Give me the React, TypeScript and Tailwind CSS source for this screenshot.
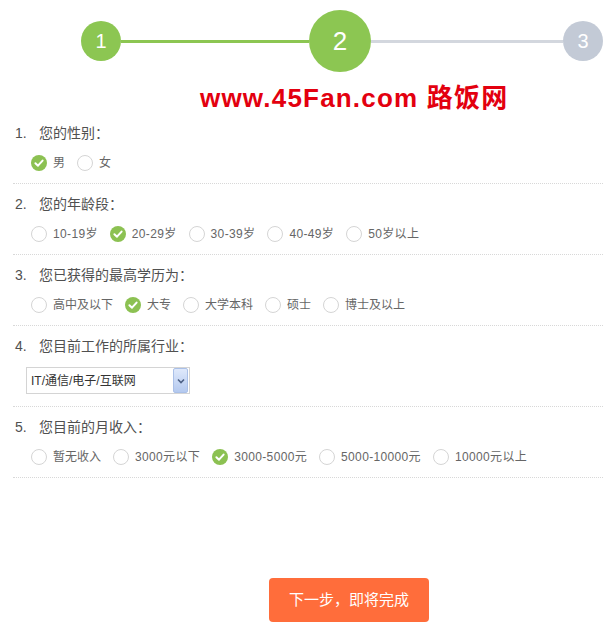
import React from 'react';

const FONT = { fontFamily: '"Liberation Sans", "Noto Sans CJK SC", sans-serif' };

type Question = {
    no: number;
    title: string;
    options?: string[];
    checked?: number;
    select?: string;
};

const questions: Question[] = [
    { no: 1, title: '您的性别：', options: ['男', '女'], checked: 0 },
    { no: 2, title: '您的年龄段：', options: ['10-19岁', '20-29岁', '30-39岁', '40-49岁', '50岁以上'], checked: 1 },
    { no: 3, title: '您已获得的最高学历为：', options: ['高中及以下', '大专', '大学本科', '硕士', '博士及以上'], checked: 1 },
    { no: 4, title: '您目前工作的所属行业：', select: 'IT/通信/电子/互联网' },
    { no: 5, title: '您目前的月收入：', options: ['暂无收入', '3000元以下', '3000-5000元', '5000-10000元', '10000元以上'], checked: 2 },
];

const Radio: React.FC<{ checked: boolean }> = ({ checked }) =>
    checked ? (
        <svg width="16" height="16" viewBox="0 0 16 16" className="shrink-0">
            <circle cx="8" cy="8" r="8" fill="#8cc152" />
            <path d="M4.4 8.2 L7 10.7 L11.6 5.6" stroke="#fff" strokeWidth="2" fill="none" strokeLinecap="round" strokeLinejoin="round" />
        </svg>
    ) : (
        <span className="w-4 h-4 shrink-0 rounded-full border border-[#d5d5d5] bg-white"></span>
    );

const Step: React.FC<{ n: number; size: 'sm' | 'lg'; active: boolean }> = ({ n, size, active }) => (
    <div
        className={`shrink-0 rounded-full flex items-center justify-center text-white ${size === 'lg' ? 'w-[62px] h-[62px] text-[26px]' : 'w-[40px] h-[40px] text-[20px]'} ${active ? 'bg-[#8cc652]' : 'bg-[#c3cad6]'}`}
    >
        {n}
    </div>
);

const Select: React.FC<{ value: string }> = ({ value }) => (
    <div className="mt-[11px] ml-[13px] w-[164px] h-[27px] border border-[#d4d4d4] bg-white flex items-center justify-between pl-[4px] pr-[1px]">
        <span className="text-[12px] text-[#333] leading-none">{value}</span>
        <div className="w-[15px] h-[25px] rounded-[2px] border border-[#aac0e8] bg-gradient-to-b from-[#dfe9fb] to-[#b4c9ef] flex items-center justify-center">
            <svg width="8" height="6" viewBox="0 0 8 6">
                <path d="M1 1.5 L4 4.5 L7 1.5" stroke="#4d6185" strokeWidth="1.6" fill="none" />
            </svg>
        </div>
    </div>
);

export default function App() {
    return (
        <div className="w-[603px] h-[627px] bg-white overflow-hidden" style={FONT}>
            {/* steps */}
            <div className="h-[82px] flex items-center pl-[81px]">
                <Step n={1} size="sm" active />
                <div className="w-[188px] h-[3px] bg-[#8cc652]"></div>
                <Step n={2} size="lg" active />
                <div className="w-[192px] h-[3px] bg-[#d3d7de]"></div>
                <Step n={3} size="sm" active={false} />
            </div>

            <div className="h-[31px] leading-[33px] pl-[200px] text-[26px] tracking-[1.2px] font-bold text-[#e3000f] whitespace-nowrap">
                www.45Fan.com 路饭网
            </div>

            <div className="ml-[13px]">
                {questions.map((q) => (
                    <div
                        key={q.no}
                        className={`border-b border-dotted border-[#d8d8d8] pt-[10px] ${q.select ? 'pb-[12px]' : 'pb-[10px]'}`}
                    >
                        <div className="h-[20px] flex items-center text-[14px] text-[#505050] leading-none">
                            <span className="w-[26px] pl-[2px]">{q.no}.</span>
                            <span>{q.title}</span>
                        </div>
                        {q.select ? (
                            <Select value={q.select} />
                        ) : (
                            <div className="mt-[10px] h-[20px] flex items-center pl-[18px] gap-[12px]">
                                {q.options!.map((o, i) => (
                                    <div key={o} className="flex items-center gap-[6px]">
                                        <Radio checked={i === q.checked} />
                                        <span className={`text-[12px] text-[#666] leading-none ${/\d/.test(o) ? 'tracking-[0.35px]' : ''}`}>{o}</span>
                                    </div>
                                ))}
                            </div>
                        )}
                    </div>
                ))}
            </div>

            <div className="pl-[269px] mt-[100px]">
                <button className="w-[160px] h-[44px] rounded-[4px] bg-[#ff6d3b] text-white text-[15px]">
                    下一步，即将完成
                </button>
            </div>
        </div>
    );
}
